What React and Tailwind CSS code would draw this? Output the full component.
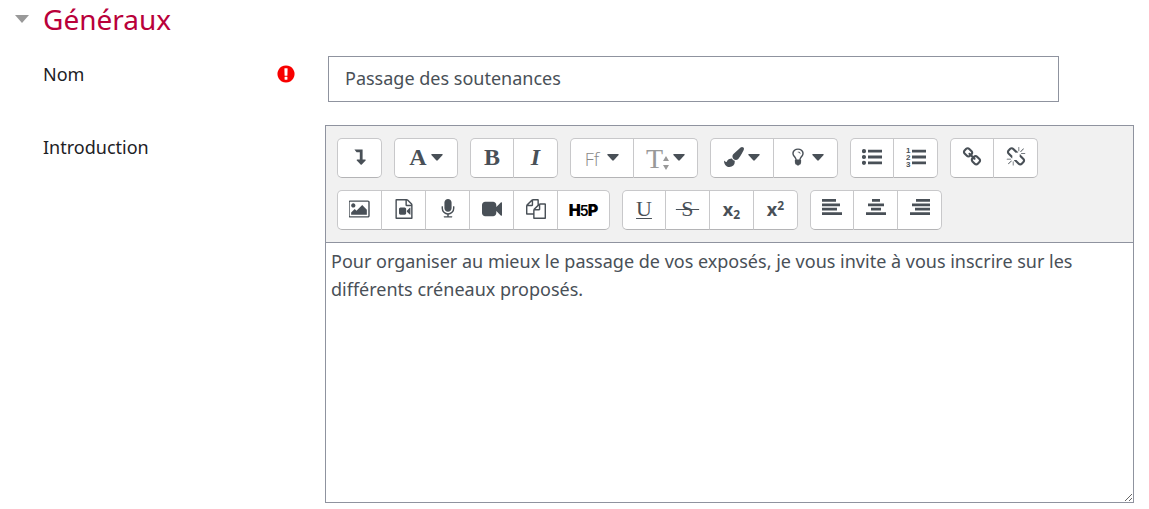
import React, { useState } from 'react';

const Glyph = ({ d, width = 1792, className = 'h-5' }) => (
  <svg viewBox={`0 0 ${width} 1792`} className={className} fill="currentColor" aria-hidden="true">
    <path d={d} />
  </svg>
);

const Caret = () => (
  <svg viewBox="0 0 12 7" className="w-3 shrink-0" fill="currentColor" aria-hidden="true">
    <path d="M0.8 0h10.4q0.8 0.2 0.4 1L6.8 6.3q-0.8 0.7-1.6 0L0.4 1Q0 0.2 0.8 0z" />
  </svg>
);

const LevelDown = () => (
  <svg viewBox="0 0 12 16" className="h-4" fill="currentColor" aria-hidden="true">
    <path d="M0.4 0.5h8.2v10h2.6q0.9 0.1 0.4 0.9L7.8 15.6q-0.6 0.5-1.2 0L2.8 11.4q-0.5-0.8 0.4-0.9h2.6V3.2H2.6z" />
  </svg>
);

const ListUl = () => (
  <svg viewBox="0 0 20 16" className="h-4" fill="currentColor" aria-hidden="true">
    <circle cx="2" cy="2.2" r="2.1" />
    <circle cx="2" cy="8" r="2.1" />
    <circle cx="2" cy="13.8" r="2.1" />
    <path d="M6 0.8h14v2.8H6zM6 6.6h14v2.8H6zM6 12.4h14v2.8H6z" />
  </svg>
);

const ListOl = () => (
  <svg viewBox="0 0 20 22" className="h-[22px]" fill="currentColor" aria-hidden="true">
    <g fontFamily="Liberation Sans, sans-serif" fontSize="8" fontWeight="700">
      <text x="0" y="7">1</text>
      <text x="0" y="14">2</text>
      <text x="0" y="21">3</text>
    </g>
    <path d="M6 3.8h14v2.8H6zM6 9.6h14v2.8H6zM6 15.4h14v2.8H6z" />
  </svg>
);

const alignPaths = {
  left: 'M0 0h14v2.8H0zM0 4.4h18v2.8H0zM0 8.8h15v2.8H0zM0 13.2h20v2.8H0z',
  center: 'M6 0h8v2.8H6zM2 4.4h16v2.8H2zM5 8.8h10v2.8H5zM0 13.2h20v2.8H0z',
  right: 'M6 0h14v2.8H6zM2 4.4h18v2.8H2zM5 8.8h15v2.8H5zM0 13.2h20v2.8H0z',
};

const Align = ({ side }) => (
  <svg viewBox="0 0 20 16" className="mb-1 h-4" fill="currentColor" aria-hidden="true">
    <path d={alignPaths[side]} />
  </svg>
);

const UpDown = () => (
  <svg viewBox="0 0 6 14" className="mt-2 h-3.5" fill="currentColor" aria-hidden="true">
    <path d="M3 0l3 5H0zM3 14l3-5H0z" />
  </svg>
);

const Letter = ({ children, className = '' }) => (
  <span className={`font-['Liberation_Serif',serif] leading-6 ${className}`}>{children}</span>
);

const paths = {
  brush:
    'M1615 0q70 0 122.5 46.5t52.5 116.5q0 63-45 151-332 629-465 752-97 91-218 91-126 0-216.5-92.5t-90.5-219.5q0-128 92-212l638-579q59-54 130-54zm-909 1034q39 76 106.5 130t150.5 76l1 71q4 213-129.5 347t-348.5 134q-123 0-218-46.5t-152.5-127.5-86.5-183-29-220q7 5 41 30t62 44.5 59 36.5 46 17q41 0 55-37 25-66 57.5-112.5t69.5-76 88-47.5 103-25.5 125-10.5z',
  bulb:
    'M1120 576q0 13-9.5 22.5t-22.5 9.5-22.5-9.5-9.5-22.5q0-46-54-71t-106-25q-13 0-22.5-9.5t-9.5-22.5 9.5-22.5 22.5-9.5q50 0 99.5 16t87 54 37.5 90zm160 0q0-72-34.5-134t-90-101.5-123-62-136.5-22.5-136.5 22.5-123 62-90 101.5-34.5 134q0 101 68 180 10 11 30.5 33t30.5 33q128 153 141 298h228q13-145 141-298 10-11 30.5-33t30.5-33q68-79 68-180zm128 0q0 155-103 268-45 49-74.5 87t-59.5 95.5-34 107.5q47 28 47 82 0 37-25 64 25 27 25 64 0 52-45 81 13 23 13 47 0 46-31.5 71t-77.5 25q-20 44-60 70t-87 26-87-26-60-70q-46 0-77.5-25t-31.5-71q0-24 13-47-45-29-45-81 0-37 25-64-25-27-25-64 0-54 47-82-4-50-34-107.5t-59.5-95.5-74.5-87q-103-113-103-268 0-99 44.5-184.5t117-142 164-89 186.5-32.5 186.5 32.5 164 89 117 142 44.5 184.5z',
  link:
    'M1520 1216q0-40-28-68l-208-208q-28-28-68-28-42 0-72 32 3 3 19 18.5t21.5 21.5 15 19 13 25.5 3.5 27.5q0 40-28 68t-68 28q-15 0-27.5-3.5t-25.5-13-19-15-21.5-21.5-18.5-19q-33 31-33 73 0 40 28 68l206 207q27 27 68 27 40 0 68-26l147-146q28-28 28-67zm-703-705q0-40-28-68l-206-207q-28-28-68-28-39 0-68 27l-147 146q-28 28-28 67 0 40 28 68l208 208q27 27 68 27 42 0 72-31-3-3-19-18.5t-21.5-21.5-15-19-13-25.5-3.5-27.5q0-40 28-68t68-28q15 0 27.5 3.5t25.5 13 19 15 21.5 21.5 18.5 19q33-31 33-73zm895 705q0 120-85 203l-147 146q-83 83-203 83-121 0-204-85l-206-207q-83-83-83-203 0-123 88-209l-88-88q-86 88-208 88-120 0-204-84l-208-208q-84-84-84-204t85-203l147-146q83-83 203-83 121 0 204 85l206 207q83 83 83 203 0 123-88 209l88 88q86-88 208-88 120 0 204 84l208 208q84 84 84 204z',
  unlink:
    'M503 1271l-256 256q-10 9-23 9-12 0-23-9-9-10-9-23t9-23l256-256q10-9 23-9t23 9q9 10 9 23t-9 23zm169 41v320q0 14-9 23t-23 9-23-9-9-23v-320q0-14 9-23t23-9 23 9 9 23zm-224-224q0 14-9 23t-23 9h-320q-14 0-23-9t-9-23 9-23 23-9h320q14 0 23 9t9 23zm1264 128q0 120-85 203l-147 146q-83 83-203 83-121 0-204-85l-334-335q-21-21-42-56l239-18 273 274q28 28 68 27.5t68-27.5l147-146q28-28 28-67 0-40-28-68l-274-275 18-239q35 21 56 42l336 336q84 86 84 204zm-617-724l-239 18-273-274q-28-28-68-28-39 0-68 27l-147 146q-28 28-28 67 0 40 28 68l274 274-18 240q-35-21-56-42l-336-336q-84-86-84-204 0-120 85-203l147-146q83-83 203-83 121 0 204 85l334 335q21 21 42 56zm633 84q0 14-9 23t-23 9h-320q-14 0-23-9t-9-23 9-23 23-9h320q14 0 23 9t9 23zm-544-544v320q0 14-9 23t-23 9-23-9-9-23v-320q0-14 9-23t23-9 23 9 9 23zm407 151l-256 256q-11 9-23 9t-23-9q-9-10-9-23t9-23l256-256q10-9 23-9t23 9q9 10 9 23t-9 23z',
  picture:
    'M576 576q0 80-56 136t-136 56-136-56-56-136 56-136 136-56 136 56 56 136zm1024 384v448h-1408v-192l320-320 160 160 512-512zm96-704h-1600q-13 0-22.5 9.5t-9.5 22.5v1216q0 13 9.5 22.5t22.5 9.5h1600q13 0 22.5-9.5t9.5-22.5v-1216q0-13-9.5-22.5t-22.5-9.5zm160 32v1216q0 66-47 113t-113 47h-1600q-66 0-113-47t-47-113v-1216q0-66 47-113t113-47h1600q66 0 113 47t47 113z',
  media:
    'M1596 380q28 28 48 76t20 88v1152q0 40-28 68t-68 28h-1344q-40 0-68-28t-28-68v-1600q0-40 28-68t68-28h896q40 0 88 20t76 48zm-444-244v376h376q-10-29-22-41l-313-313q-12-12-41-22zm384 1528v-1024h-416q-40 0-68-28t-28-68v-416h-768v1536h1280zm-576-896q52 0 90 38t38 90v384q0 52-38 90t-90 38h-384q-52 0-90-38t-38-90v-384q0-52 38-90t90-38h384zm492 2q20 8 20 30v576q0 22-20 30-8 2-12 2-14 0-23-9l-265-266v-90l265-266q9-9 23-9 4 0 12 2z',
  microphone:
    'M1472 704v128q0 221-147.5 384.5t-364.5 187.5v132h256q26 0 45 19t19 45-19 45-45 19h-640q-26 0-45-19t-19-45 19-45 45-19h256v-132q-217-24-364.5-187.5t-147.5-384.5v-128q0-26 19-45t45-19 45 19 19 45v128q0 185 131.5 316.5t316.5 131.5 316.5-131.5 131.5-316.5v-128q0-26 19-45t45-19 45 19 19 45zm-256-384v512q0 132-94 226t-226 94-226-94-94-226v-512q0-132 94-226t226-94 226 94 94 226z',
  video:
    'M1792 352v1088q0 42-39 59-13 5-25 5-27 0-45-19l-403-403v166q0 119-84.5 203.5t-203.5 84.5h-704q-119 0-203.5-84.5t-84.5-203.5v-704q0-119 84.5-203.5t203.5-84.5h704q119 0 203.5 84.5t84.5 203.5v165l403-402q18-19 45-19 12 0 25 5 39 17 39 59z',
  files:
    'M1696 384q40 0 68 28t28 68v1216q0 40-28 68t-68 28h-960q-40 0-68-28t-28-68v-288h-544q-40 0-68-28t-28-68v-672q0-40 20-88t48-76l408-408q28-28 76-48t88-20h416q40 0 68 28t28 68v328q68-40 128-40h416zm-544 213l-299 299h299v-299zm-640-384l-299 299h299v-299zm196 647l316-316v-416h-384v416q0 40-28 68t-68 28h-416v640h512v-256q0-40 20-88t48-76zm956 804v-1152h-384v416q0 40-28 68t-68 28h-416v640h896z',
  required:
    'M896 128q209 0 385.5 103t279.5 279.5 103 385.5-103 385.5-279.5 279.5-385.5 103-385.5-103-279.5-279.5-103-385.5 103-385.5 279.5-279.5 385.5-103zm128 1247v-190q0-14-9-23.5t-22-9.5h-192q-13 0-23 10t-10 23v190q0 13 10 23t23 10h192q13 0 22-9.5t9-23.5zm-2-344l18-621q0-12-10-18-10-8-24-8h-220q-14 0-24 8-10 6-10 18l17 621q0 10 10 17.5t24 7.5h185q14 0 23.5-7.5t10.5-17.5z',
};

const ToolGroup = ({ children }) => <div className="flex h-10">{children}</div>;

const ToolButton = ({ label, width = 'w-11', children }) => (
  <button
    type="button"
    aria-label={label}
    className={`flex items-center justify-center gap-1 border-y border-r border-[#c8c8ca] border-b-[#b4b4b6] bg-white pb-0.5 first:rounded-l-[5px] first:border-l last:rounded-r-[5px] hover:bg-gray-50 ${width}`}
  >
    {children}
  </button>
);

const Toolbar = () => (
  <div className="flex flex-col gap-3 border-b border-[#8f939f] bg-[#f1f1f1] px-[11px] py-3 text-[#495057]">
    <div className="flex flex-wrap gap-3">
      <ToolGroup>
        <ToolButton label="Afficher plus de boutons" width="w-[45px]"><LevelDown /></ToolButton>
      </ToolGroup>
      <ToolGroup>
        <ToolButton label="Styles de paragraphe" width="w-16">
          <Letter className="text-2xl font-bold">A</Letter>
          <Caret />
        </ToolButton>
      </ToolGroup>
      <ToolGroup>
        <ToolButton label="Gras"><Letter className="text-2xl font-bold">B</Letter></ToolButton>
        <ToolButton label="Italique"><Letter className="text-2xl font-bold italic">I</Letter></ToolButton>
      </ToolGroup>
      <ToolGroup>
        <ToolButton label="Police" width="w-16">
          <span className="mr-1 pt-1 font-['Open_Sans',sans-serif] text-lg font-light leading-5 text-[#888]">Ff</span>
          <Caret />
        </ToolButton>
        <ToolButton label="Taille de police" width="w-16">
          <span className="flex items-center pt-1 text-[#999]">
            <Letter className="text-[28px]">T</Letter>
            <UpDown />
          </span>
          <Caret />
        </ToolButton>
      </ToolGroup>
      <ToolGroup>
        <ToolButton label="Couleur du texte" width="w-16">
          <Glyph d={paths.brush} />
          <Caret />
        </ToolButton>
        <ToolButton label="Couleur de fond" width="w-16">
          <Glyph d={paths.bulb} />
          <Caret />
        </ToolButton>
      </ToolGroup>
      <ToolGroup>
        <ToolButton label="Liste à puces"><ListUl /></ToolButton>
        <ToolButton label="Liste numérotée"><ListOl /></ToolButton>
      </ToolGroup>
      <ToolGroup>
        <ToolButton label="Lien"><Glyph d={paths.link} /></ToolButton>
        <ToolButton label="Supprimer le lien"><Glyph d={paths.unlink} /></ToolButton>
      </ToolGroup>
    </div>
    <div className="flex flex-wrap gap-3">
      <ToolGroup>
        <ToolButton label="Image" width="w-[45px]"><Glyph d={paths.picture} width={1920} /></ToolButton>
        <ToolButton label="Média"><Glyph d={paths.media} /></ToolButton>
        <ToolButton label="Enregistrer audio"><Glyph d={paths.microphone} /></ToolButton>
        <ToolButton label="Enregistrer vidéo"><Glyph d={paths.video} /></ToolButton>
        <ToolButton label="Gérer les fichiers"><Glyph d={paths.files} /></ToolButton>
        <ToolButton label="H5P" width="w-[52px]">
          <span className="flex items-baseline pt-1 font-['Inter',sans-serif] text-base font-black leading-4 text-black">
            <span>H</span>
            <span className="-mx-px text-sm font-semibold">5</span>
            <span>P</span>
          </span>
        </ToolButton>
      </ToolGroup>
      <ToolGroup>
        <ToolButton label="Souligné">
          <Letter className="text-[22px] underline decoration-1 underline-offset-2">U</Letter>
        </ToolButton>
        <ToolButton label="Barré">
          <Letter className="text-[22px] line-through decoration-1">&#8202;&#8202;&#8202;S&#8202;&#8202;&#8202;</Letter>
        </ToolButton>
        <ToolButton label="Indice">
          <span className="text-lg font-bold leading-5">x<sub className="text-xs">2</sub></span>
        </ToolButton>
        <ToolButton label="Exposant">
          <span className="text-lg font-bold leading-5">x<sup className="text-xs">2</sup></span>
        </ToolButton>
      </ToolGroup>
      <ToolGroup>
        <ToolButton label="Aligner à gauche"><Align side="left" /></ToolButton>
        <ToolButton label="Centrer"><Align side="center" /></ToolButton>
        <ToolButton label="Aligner à droite"><Align side="right" /></ToolButton>
      </ToolGroup>
    </div>
  </div>
);

const App = () => {
  const [name, setName] = useState('Passage des soutenances');
  const [intro, setIntro] = useState(
    'Pour organiser au mieux le passage de vos exposés, je vous invite à vous inscrire sur les différents créneaux proposés.'
  );
  const [open, setOpen] = useState(true);

  return (
    <form className="bg-white pr-[15px] font-['Noto_Sans','Open_Sans',sans-serif] text-lg text-[#1d2125]">
      <h3 className="text-[28px] leading-[38px] text-[#b9003a]">
        <button type="button" aria-expanded={open} onClick={() => setOpen(!open)} className="flex items-center pl-[15px]">
          <svg viewBox="0 0 14 8" className="mr-3.5 w-3.5" aria-hidden="true">
            <path d="M0 0h14L7 8z" fill="#999" />
          </svg>
          Généraux
        </button>
      </h3>

      {open && (
        <div className="flex flex-col gap-[23px] pt-[18px] pl-[43px]">
          <div className="flex items-start">
            <div className="flex w-[285px] shrink-0 items-center justify-between pt-1 pr-8">
              <label htmlFor="name">Nom</label>
              <Glyph d={paths.required} className="h-5 text-[#f80000]" />
            </div>
            <input
              id="name"
              type="text"
              value={name}
              onChange={(e) => setName(e.target.value)}
              className="mr-[75px] h-[46px] min-w-0 flex-1 border border-[#8f939f] px-4 pb-0.5 text-[#495057]"
            />
          </div>

          <div className="flex items-start">
            <label htmlFor="intro" className="w-[282px] shrink-0 pt-2">Introduction</label>
            <div className="min-w-0 flex-1 border border-[#8f939f]">
              <Toolbar />
              <textarea
                id="intro"
                rows={9}
                value={intro}
                onChange={(e) => setIntro(e.target.value)}
                className="block w-full px-[5px] pt-1 pb-[3px] text-lg leading-7 text-[#495057]"
              />
            </div>
          </div>
        </div>
      )}
    </form>
  );
};

export default App;
